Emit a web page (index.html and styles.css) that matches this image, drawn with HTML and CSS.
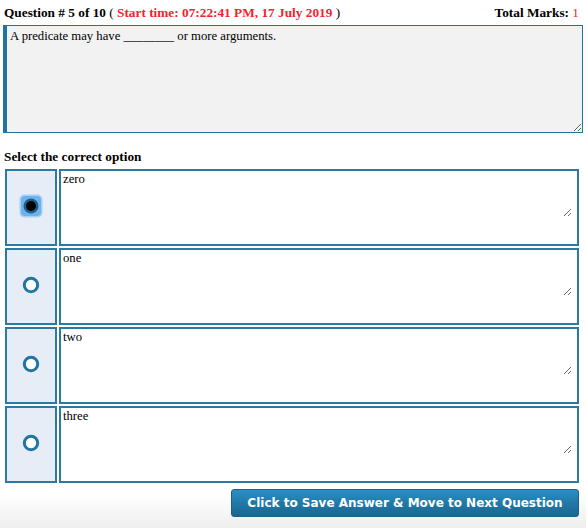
FILE: index.html
```html
<!DOCTYPE html>
<html>
<head>
<meta charset="utf-8">
<link rel="stylesheet" href="styles.css">
</head>
<body>
<div class="page">
  <div class="head">
    <div class="qnum"><b>Question # 5 of 10</b> ( <b class="red">Start time: 07:22:41 PM, 17 July 2019</b> )</div>
    <div class="marks"><b>Total Marks:</b> <span class="red">1</span></div>
  </div>
  <textarea class="question" readonly>A predicate may have ________ or more arguments.</textarea>
  <div class="label">Select the correct option</div>
  <div class="options">
    <div class="pick"><svg width="24" height="24" viewBox="0 0 24 24"><rect x="0.5" y="0.5" width="23" height="23" rx="5" fill="#a4d0f7"/><rect x="2" y="2" width="20" height="20" rx="4" fill="#6fb0ee"/><circle cx="12" cy="12" r="7.5" fill="#1c6288"/><circle cx="12" cy="12" r="5" fill="#000"/></svg></div>
    <div class="ans"><textarea readonly>zero</textarea></div>
    <div class="pick"><svg width="18" height="18" viewBox="0 0 18 18"><circle cx="9" cy="9" r="6.7" fill="#fff" stroke="#1f76a1" stroke-width="3"/></svg></div>
    <div class="ans"><textarea readonly>one</textarea></div>
    <div class="pick"><svg width="18" height="18" viewBox="0 0 18 18"><circle cx="9" cy="9" r="6.7" fill="#fff" stroke="#1f76a1" stroke-width="3"/></svg></div>
    <div class="ans"><textarea readonly>two</textarea></div>
    <div class="pick"><svg width="18" height="18" viewBox="0 0 18 18"><circle cx="9" cy="9" r="6.7" fill="#fff" stroke="#1f76a1" stroke-width="3"/></svg></div>
    <div class="ans"><textarea readonly>three</textarea></div>
  </div>
  <div class="foot">
    <button class="next">Click to Save Answer &amp; Move to Next Question</button>
  </div>
</div>
</body>
</html>
```
FILE: styles.css
```css
html, body {
  margin: 0;
  padding: 0;
  background: #fff;
}
body {
  font-family: "Liberation Serif", "Times New Roman", serif;
  font-size: 13.3px;
  color: #000;
}
.page {
  width: 586px;
  height: 528px;
  overflow: hidden;
}
.head {
  display: flex;
  justify-content: space-between;
  padding: 5px 7px 0 4px;
  height: 20px;
  line-height: 15px;
}
.red { color: #f5222d; }
.marks .red { font-weight: normal; }
.question {
  display: block;
  box-sizing: border-box;
  margin: 0 0 0 3px;
  width: 580px;
  height: 108px;
  border: 1px solid #21759b;
  border-left: 4px solid #21759b;
  background: #f2f2f2;
  font-family: "Liberation Serif", "Times New Roman", serif;
  font-size: 12.7px;
  line-height: 15px;
  padding: 3px 3px;
  color: #000;
  outline: none;
}
.label {
  font-weight: bold;
  padding: 16px 0 0 4px;
  height: 20px;
  line-height: 15px;
}
.options {
  display: grid;
  grid-template-columns: 52px 520px;
  grid-auto-rows: 77px;
  column-gap: 2px;
  row-gap: 2px;
  margin-left: 5px;
}
.pick {
  box-sizing: border-box;
  border: 2px solid #2a7aa3;
  background: #e6edf7;
  display: flex;
  align-items: center;
  justify-content: center;
  padding-bottom: 4px;
}
.ans {
  box-sizing: border-box;
  border: 2px solid #2a7aa3;
  background: #fff;
}
.ans textarea {
  display: block;
  box-sizing: border-box;
  width: 511px;
  height: 46px;
  margin: 0;
  border: 0;
  background: #fff;
  font-family: "Liberation Serif", "Times New Roman", serif;
  font-size: 12.7px;
  line-height: 15px;
  padding: 1px 2px 0;
  color: #000;
  outline: none;
}
.foot {
  display: flex;
  justify-content: flex-end;
  padding: 6px 7px 0 0;
  height: 46px;
  background: linear-gradient(to bottom, #fff 0%, #fff 20%, #ebebeb 100%);
}
.next {
  width: 348px;
  height: 28px;
  border: 1px solid #1a6088;
  border-radius: 3px;
  background: linear-gradient(to bottom, #2b8fc4 0%, #2179a8 50%, #1b6690 100%);
  color: #fff;
  font-family: "DejaVu Sans", Verdana, sans-serif;
  font-weight: bold;
  font-size: 12px;
  padding: 0;
}
```
